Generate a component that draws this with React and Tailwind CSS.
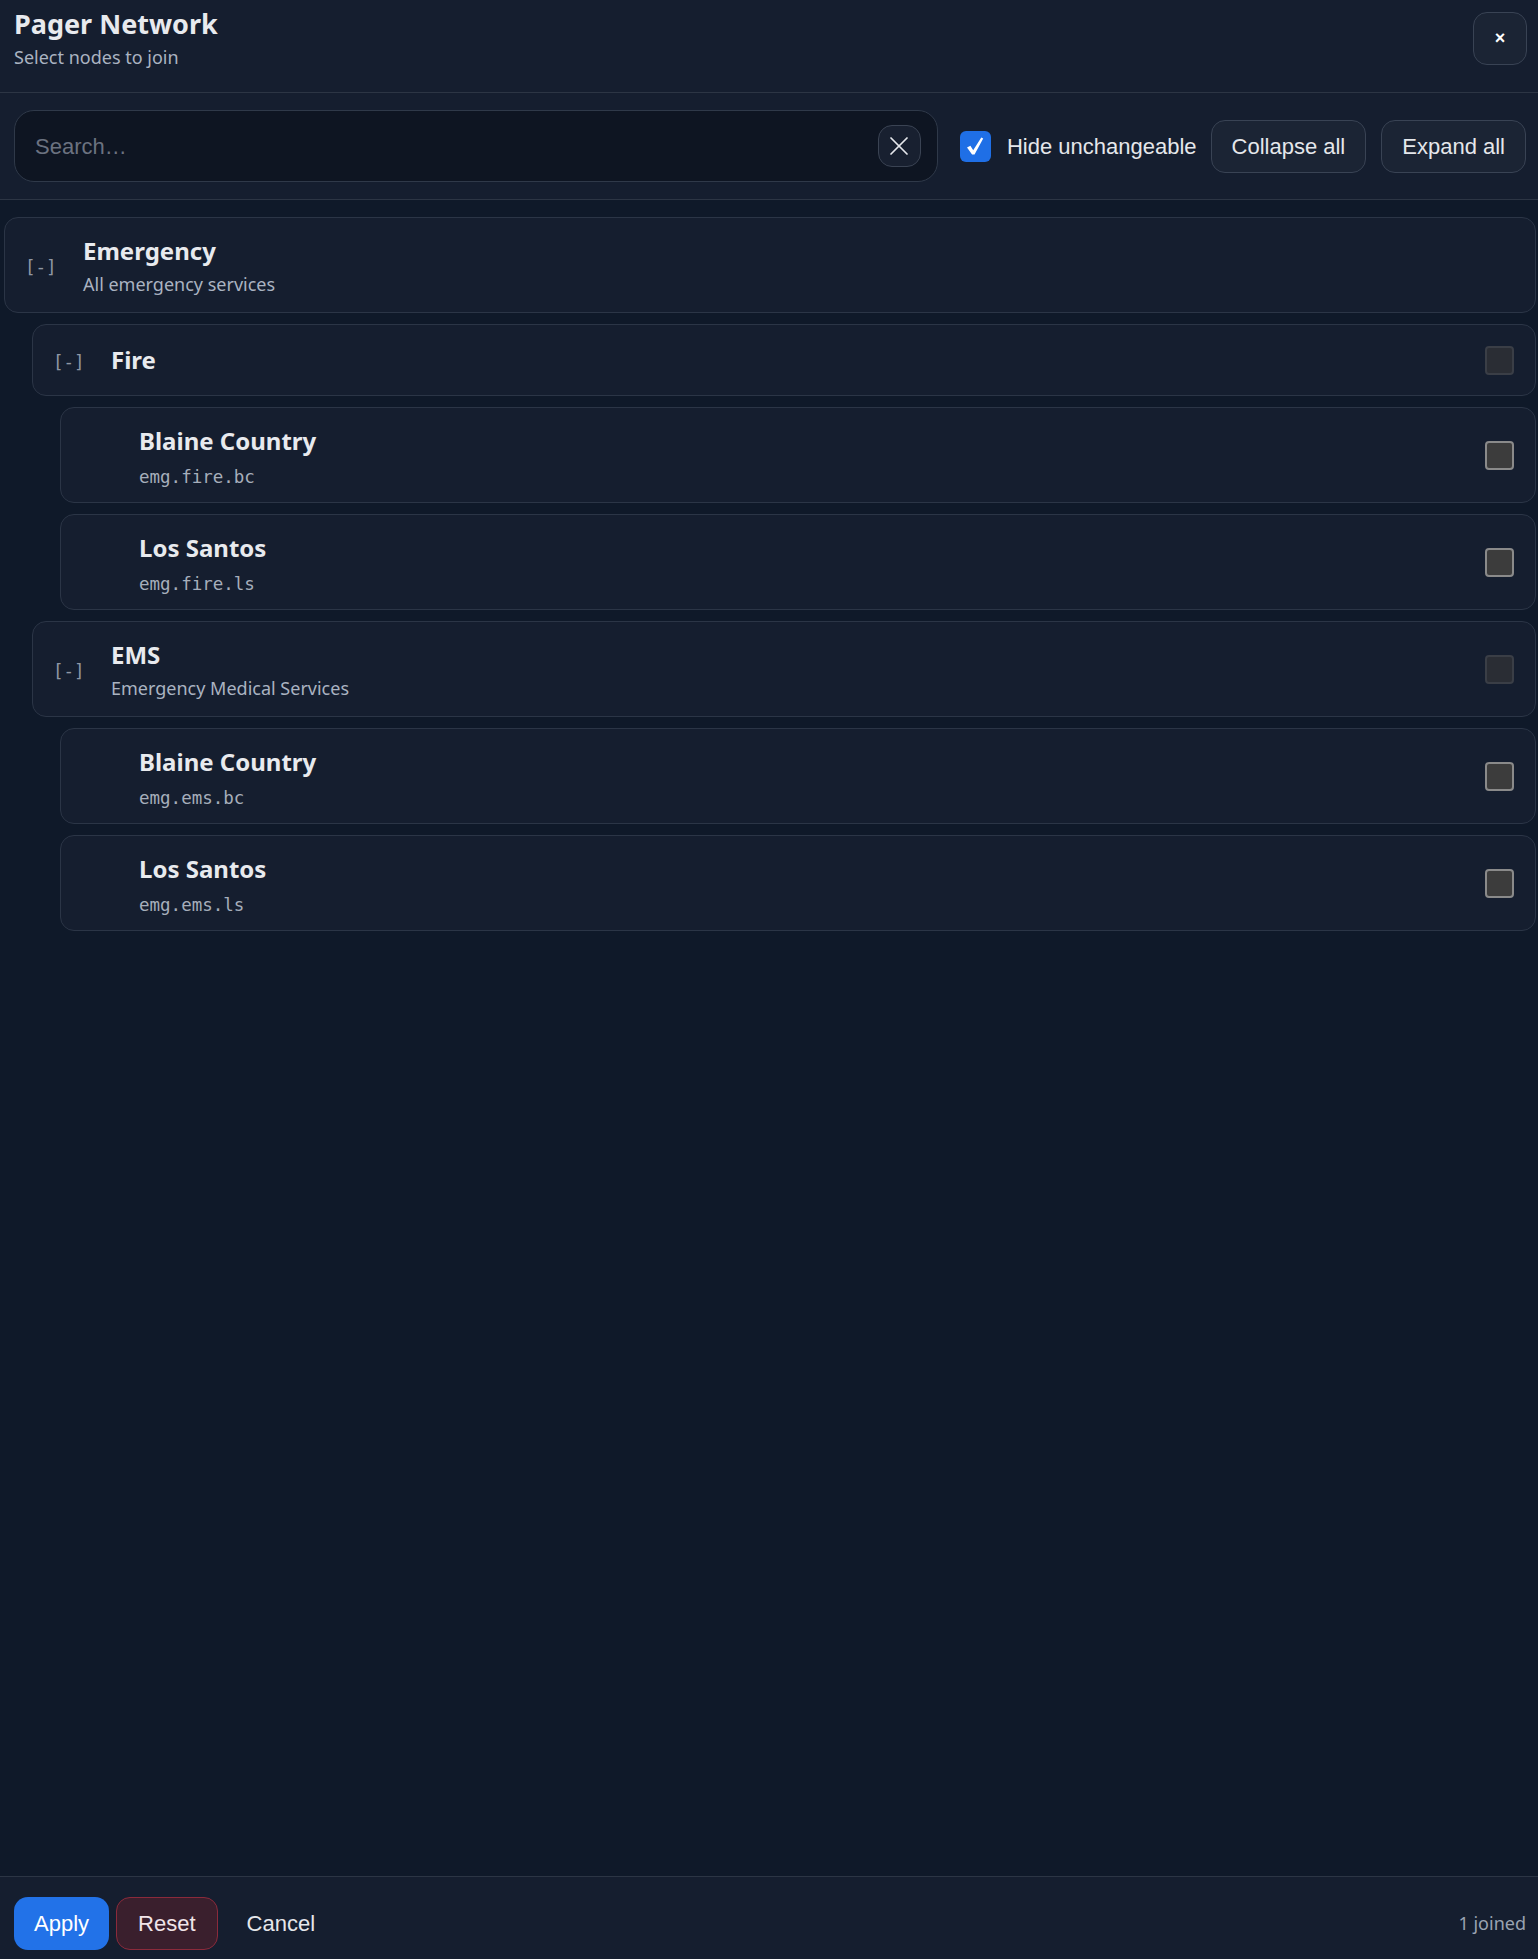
import React, { useState } from 'react';
import { X } from 'lucide-react';

const tree = [
  {
    id: 'emg',
    label: 'Emergency',
    desc: 'All emergency services',
    noCheck: true,
    children: [
      {
        id: 'emg.fire',
        label: 'Fire',
        disabled: true,
        children: [
          { id: 'emg.fire.bc', label: 'Blaine Country', code: 'emg.fire.bc' },
          { id: 'emg.fire.ls', label: 'Los Santos', code: 'emg.fire.ls' },
        ],
      },
      {
        id: 'emg.ems',
        label: 'EMS',
        desc: 'Emergency Medical Services',
        disabled: true,
        children: [
          { id: 'emg.ems.bc', label: 'Blaine Country', code: 'emg.ems.bc' },
          { id: 'emg.ems.ls', label: 'Los Santos', code: 'emg.ems.ls' },
        ],
      },
    ],
  },
];

const sans = 'font-["Noto_Sans",sans-serif]';
const arial = 'font-["Liberation_Sans",Arial,sans-serif]';
const mono = 'font-["DejaVu_Sans_Mono",monospace]';

const NodeBox = ({ disabled }) => (
  <div
    className={
      disabled
        ? 'w-[29px] h-[29px] rounded-[4px] border-2 border-[#3a3e46] bg-[#2a2d34] shrink-0'
        : 'w-[29px] h-[29px] rounded-[4px] border-2 border-[#8a8a8a] bg-[#3c3c3c] shrink-0'
    }
  />
);

const Node = ({ node, depth, collapsed, toggle }) => {
  const hasKids = node.children && node.children.length > 0;
  const isOpen = !collapsed[node.id];
  const twoLine = node.desc || node.code;

  return (
    <>
      <div
        className={`flex items-center rounded-[14px] border border-[#2b3546] bg-[#151e2f] pl-[22px] pr-[21px] ${
          twoLine ? 'h-[96px]' : 'h-[72px]'
        }`}
        style={{ marginLeft: depth * 28 }}
      >
        <div className={`-ml-[2px] w-[58px] shrink-0 pt-[4px] text-[17.5px] text-[#8f97a4] ${mono}`}>
          {hasKids && (
            <button onClick={() => toggle(node.id)} className="cursor-pointer">
              {isOpen ? '[-]' : '[+]'}
            </button>
          )}
        </div>
        <div className={`flex-1 min-w-0 ${node.code ? 'pt-[10px]' : node.desc ? 'pt-[4px]' : ''}`}>
          <div className={`text-[24px] font-bold leading-[34px] text-[#e8eaee] ${sans}`}>{node.label}</div>
          {node.desc && (
            <div className={`text-[18px] leading-[32px] text-[#aab3c1] ${sans}`}>{node.desc}</div>
          )}
          {node.code && (
            <div className={`text-[17.5px] leading-[38px] text-[#a6aebb] ${mono}`}>{node.code}</div>
          )}
        </div>
        {!node.noCheck && <NodeBox disabled={node.disabled} />}
      </div>
      {hasKids && isOpen &&
        node.children.map((c) => (
          <Node key={c.id} node={c} depth={depth + 1} collapsed={collapsed} toggle={toggle} />
        ))}
    </>
  );
};

export default function App() {
  const [query, setQuery] = useState('');
  const [hide, setHide] = useState(true);
  const [collapsed, setCollapsed] = useState({});

  const toggle = (id) => setCollapsed((p) => ({ ...p, [id]: !p[id] }));

  return (
    <div className="h-[1959px] flex flex-col bg-[#0f1929] overflow-hidden">
      {/* Header */}
      <div className="h-[93px] shrink-0 flex items-start justify-between bg-[#151e2f] border-b border-[#2c3544] pl-[14px] pr-[11px]">
        <div className="pt-[6px]">
          <h1 className={`text-[27px] font-bold leading-[36px] text-[#e8eaee] ${sans}`}>Pager Network</h1>
          <p className={`mt-[4px] text-[18px] leading-[22px] text-[#aab3c1] ${sans}`}>Select nodes to join</p>
        </div>
        <button className={`mt-[12px] w-[54px] h-[53px] rounded-[14px] border border-[#394354] bg-[#1b2434] text-[18px] font-bold text-white ${arial}`}>
          ×
        </button>
      </div>

      {/* Toolbar */}
      <div className="h-[107px] shrink-0 flex items-center bg-[#151e2f] border-b border-[#2c3544] pl-[14px] pr-[12px]">
        <div className="flex-1 h-[72px] flex items-center rounded-[20px] border border-[#2f3949] bg-[#0e1522] pl-5 pr-[16px]">
          <input
            value={query}
            onChange={(e) => setQuery(e.target.value)}
            placeholder="Search…"
            className={`flex-1 bg-transparent outline-none text-[22px] text-[#e5e7eb] placeholder:text-[#6b7280] ${arial}`}
          />
          <button
            onClick={() => setQuery('')}
            className="w-[43px] h-[42px] flex items-center justify-center rounded-[14px] border border-[#3a4353] bg-[#182030]"
          >
            <X className="w-[32px] h-[32px] text-[#e5e7eb]" strokeWidth={1.3} />
          </button>
        </div>
        <label className="ml-[22px] flex items-center cursor-pointer">
          <span
            onClick={() => setHide(!hide)}
            className={`w-[31px] h-[31px] rounded-[6px] flex items-center justify-center ${hide ? 'bg-[#1f6fe6]' : 'bg-[#3c3c3c] border-2 border-[#8a8a8a]'}`}
          >
            {hide && (
              <svg width="18" height="18" viewBox="0 0 16 16">
                <path d="M0.9 9.4 L3.9 7.8 L6.4 11.8 L13.6 0.5 L15.3 1.4 L7.6 15.5 L5.4 15.5 Z" fill="white" />
              </svg>
            )}
          </span>
          <span className={`ml-[16px] text-[22px] text-[#e5e7eb] ${arial}`}>Hide unchangeable</span>
        </label>
        <button className={`ml-[14px] h-[53px] px-5 rounded-[14px] border border-[#394354] bg-[#1b2434] text-[22px] text-[#e5e7eb] ${arial}`}>
          Collapse all
        </button>
        <button className={`ml-[15px] h-[53px] px-5 rounded-[14px] border border-[#394354] bg-[#1b2434] text-[22px] text-[#e5e7eb] ${arial}`}>
          Expand all
        </button>
      </div>

      {/* Tree */}
      <div className="flex-1 overflow-auto pt-[17px] pl-[4px] pr-[2px] flex flex-col gap-[11px]">
        {tree.map((n) => (
          <Node key={n.id} node={n} depth={0} collapsed={collapsed} toggle={toggle} />
        ))}
      </div>

      {/* Footer */}
      <div className="h-[83px] shrink-0 flex items-start justify-between bg-[#151e2f] border-t border-[#2c3544] pt-[20px] pl-[14px] pr-[12px]">
        <div className="flex items-center gap-[7px]">
          <button className={`h-[53px] px-5 rounded-[14px] bg-[#2272e8] text-[22px] text-white ${arial}`}>Apply</button>
          <button className={`h-[53px] px-[21px] rounded-[14px] border border-[#8b2a3b] bg-[#3a1f2d] text-[22px] text-[#f1e4e8] ${arial}`}>Reset</button>
          <button className={`h-[53px] px-[22px] text-[22px] text-[#e5e7eb] ${arial}`}>Cancel</button>
        </div>
        <span className={`self-center -mt-[10px] text-[18px] text-[#9aa3b2] ${sans}`}>1 joined</span>
      </div>
    </div>
  );
}
